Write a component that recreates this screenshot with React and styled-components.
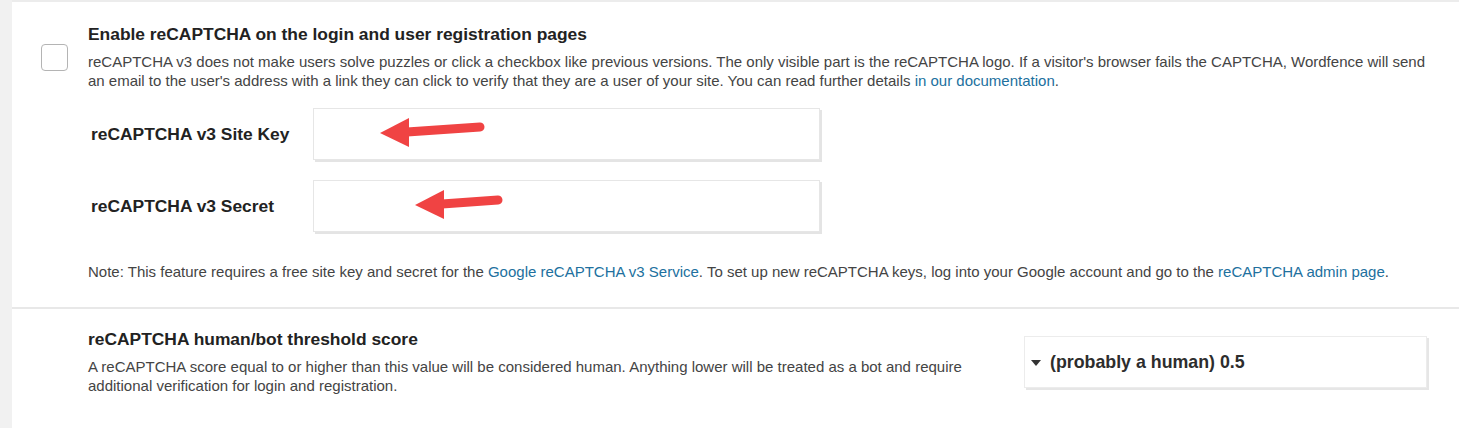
import styled, { createGlobalStyle } from 'styled-components';

const GlobalStyle = createGlobalStyle`
    html, body {
        margin: 0;
        padding: 0;
        background: #ffffff;
    }
    body {
        font-family: "Liberation Sans", Arial, sans-serif;
        color: #2d2d2d;
    }
`;

const PageStyled = styled.div`
    display: flex;
    min-height: 428px;
    background: #f1f1f1;
`;

const PanelStyled = styled.div`
    flex: 1;
    margin-left: 12px;
    background: #ffffff;
    border-top: 2px solid #ececec;
`;

const SectionStyled = styled.div`
    padding: ${(p) => p.$padding};
    border-bottom: ${(p) => (p.$divider ? '2px solid #e8e8e8' : 'none')};
`;

const OptionRowStyled = styled.div`
    display: flex;
    align-items: center;
`;

const CheckboxCell = styled.div`
    width: 76px;
    flex-shrink: 0;
    padding-left: 29px;
    box-sizing: border-box;
`;

const CheckboxStyled = styled.span`
    display: block;
    width: 27px;
    height: 27px;
    box-sizing: border-box;
    border: 1px solid #b4b4b4;
    border-radius: 4px;
    background: #fff;
`;

const TitleStyled = styled.div`
    font-size: 17.4px;
    font-weight: bold;
    line-height: 20px;
    color: #222;
    margin-bottom: 8px;
`;

const DescStyled = styled.div`
    font-size: 15px;
    line-height: 19px;
    color: #444;
`;

const LinkStyled = styled.a`
    color: #21709e;
    text-decoration: none;
`;

const FieldListStyled = styled.div`
    display: flex;
    flex-direction: column;
    gap: 20px;
    margin: 18px 0 0 79px;
`;

const FieldRowStyled = styled.div`
    display: flex;
    align-items: center;
`;

const LabelStyled = styled.label`
    width: 222px;
    font-size: 17.4px;
    font-weight: bold;
    color: #222;
`;

const InputBoxStyled = styled.div`
    position: relative;
    width: 507px;
    height: 52px;
    box-sizing: border-box;
    border: 1px solid #e6e6e6;
    box-shadow: 2px 2px 0 #e4e4e4;
    background: #fff;
`;

const ArrowStyled = styled.svg`
    position: absolute;
    left: 0;
    top: 0;
    overflow: visible;
`;

const NoteStyled = styled(DescStyled)`
    margin: 30px 0 0 76px;
`;

const ThresholdRowStyled = styled.div`
    display: grid;
    grid-template-columns: 1fr 403px;
    column-gap: 40px;
    align-items: center;
    padding-left: 76px;
`;

const SelectStyled = styled.div`
    display: flex;
    align-items: center;
    gap: 9px;
    height: 52px;
    box-sizing: border-box;
    padding-left: 6px;
    border: 1px solid #ececec;
    box-shadow: 2px 2px 0 #e6e6e6;
    font-size: 17.8px;
    font-weight: bold;
    color: #2d2d2d;
`;

const CaretStyled = styled.span`
    width: 0;
    height: 0;
    border-left: 5px solid transparent;
    border-right: 5px solid transparent;
    border-top: 6px solid #333;
    margin-top: 1px;
`;

function Arrow({ tipX, backX, shaftEndX, shaftEndY }) {
    return (
        <ArrowStyled width="1" height="1">
            <path
                d={`M${backX - 2} 23 L${shaftEndX} ${shaftEndY}`}
                stroke="#f04343"
                strokeWidth="9"
                strokeLinecap="round"
                fill="none"
            />
            <polygon points={`${tipX},24 ${backX},9 ${backX},38`} fill="#f04343" />
        </ArrowStyled>
    );
}

function App() {
    return (
        <>
            <GlobalStyle />
            <PageStyled>
                <PanelStyled>
                    <SectionStyled $padding="22px 24px 26px 0" $divider>
                        <OptionRowStyled>
                            <CheckboxCell>
                                <CheckboxStyled />
                            </CheckboxCell>
                            <div>
                                <TitleStyled>Enable reCAPTCHA on the login and user registration pages</TitleStyled>
                                <DescStyled>
                                    reCAPTCHA v3 does not make users solve puzzles or click a checkbox like previous
                                    versions. The only visible part is the reCAPTCHA logo. If a visitor's browser fails
                                    the CAPTCHA, Wordfence will send an email to the user's address with a link they can
                                    click to verify that they are a user of your site. You can read further details{' '}
                                    <LinkStyled href="#">in our documentation</LinkStyled>.
                                </DescStyled>
                            </div>
                        </OptionRowStyled>
                        <FieldListStyled>
                            <FieldRowStyled>
                                <LabelStyled>reCAPTCHA v3 Site Key</LabelStyled>
                                <InputBoxStyled>
                                    <Arrow tipX={66} backX={95} shaftEndX={166} shaftEndY={18} />
                                </InputBoxStyled>
                            </FieldRowStyled>
                            <FieldRowStyled>
                                <LabelStyled>reCAPTCHA v3 Secret</LabelStyled>
                                <InputBoxStyled>
                                    <Arrow tipX={101} backX={130} shaftEndX={184} shaftEndY={19} />
                                </InputBoxStyled>
                            </FieldRowStyled>
                        </FieldListStyled>
                        <NoteStyled>
                            Note: This feature requires a free site key and secret for the{' '}
                            <LinkStyled href="#">Google reCAPTCHA v3 Service</LinkStyled>. To set up new reCAPTCHA keys,
                            log into your Google account and go to the{' '}
                            <LinkStyled href="#">reCAPTCHA admin page</LinkStyled>.
                        </NoteStyled>
                    </SectionStyled>
                    <SectionStyled $padding="20px 32px 30px 0">
                        <ThresholdRowStyled>
                            <div>
                                <TitleStyled>reCAPTCHA human/bot threshold score</TitleStyled>
                                <DescStyled>
                                    A reCAPTCHA score equal to or higher than this value will be considered human.
                                    Anything lower will be treated as a bot and require additional verification for
                                    login and registration.
                                </DescStyled>
                            </div>
                            <SelectStyled>
                                <CaretStyled />
                                (probably a human) 0.5
                            </SelectStyled>
                        </ThresholdRowStyled>
                    </SectionStyled>
                </PanelStyled>
            </PageStyled>
        </>
    );
}

export default App;
